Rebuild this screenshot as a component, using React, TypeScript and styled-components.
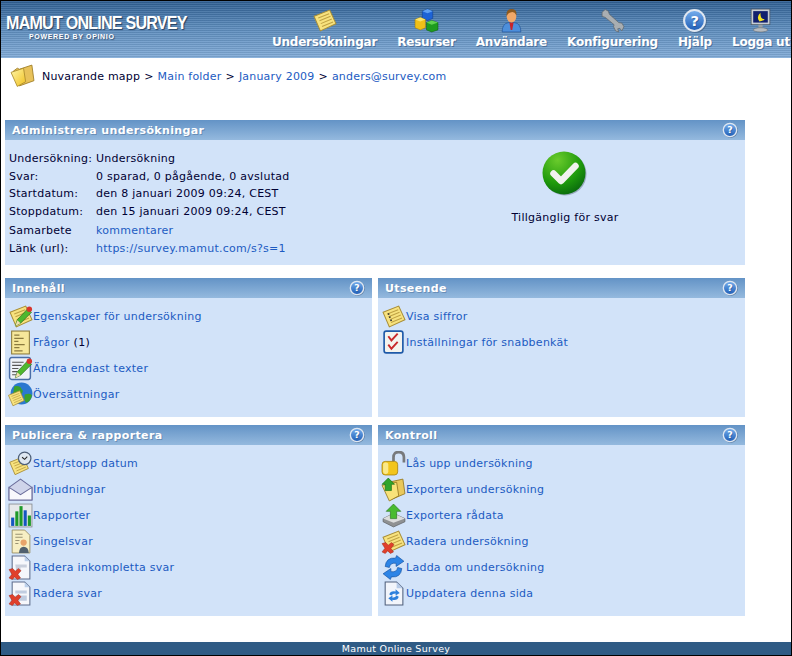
import React, { useId } from "react";
import styled, { createGlobalStyle } from "styled-components";

const Global = createGlobalStyle`
  html, body { margin: 0; padding: 0; background: #fff; }
  body { font-family: "DejaVu Sans", Verdana, sans-serif; font-size: 11px; letter-spacing: .26px; color: #000033; }
  a { color: #1c5bc2; text-decoration: none; }
`;

const Page = styled.div`
  width: 792px; height: 656px; box-sizing: border-box; overflow: hidden;
  border: 1px solid #000;
  display: flex; flex-direction: column; background: #fff;
`;
const Header = styled.header`
  height: 57px; flex: none; display: flex; justify-content: space-between; box-sizing: border-box;
  background:
    repeating-linear-gradient(to bottom, rgba(255,255,255,.09) 0 1px, rgba(0,0,0,.07) 1px 2px),
    linear-gradient(to bottom, #2f5f93 0, #5a8abb 45%, #82acd8 100%);
`;
const Logo = styled.div`
  padding: 13px 0 0 5px; color: #fff; display: flex; flex-direction: column;
`;
const LogoTitle = styled.div`
  font: bold 17.5px/18px "Liberation Sans", Arial, sans-serif; letter-spacing: -0.85px;
  transform: scaleX(.92); transform-origin: left center;
  text-shadow: 1px 1px 1px rgba(20,40,70,.75); white-space: nowrap;
`;
const LogoSub = styled.div`
  font: bold 7px/8px "Liberation Sans", Arial, sans-serif; letter-spacing: .67px; margin: 1px 0 0 23px;
  text-shadow: 1px 1px 1px rgba(20,40,70,.6); white-space: nowrap;
`;
const Nav = styled.nav`
  display: flex; gap: 20px; padding: 7px 1px 0 0;
`;
const NavItem = styled.a`
  display: flex; flex-direction: column; align-items: center; color: #fff; gap: 1px;
  font: bold 12px/16px "DejaVu Sans", Verdana, sans-serif; letter-spacing: -.2px; white-space: nowrap;
  text-shadow: 1px 1px 0 rgba(30,60,100,.45);
  svg { width: 25px; height: 25px; display: block; }
`;
const Crumbs = styled.div`
  height: 62px; flex: none; box-sizing: border-box; padding: 5px 0 0 9px;
  display: flex; align-items: flex-start; gap: 7px;
  svg { width: 25px; height: 25px; flex: none; }
`;
const CrumbText = styled.div`
  line-height: 14px; padding-top: 7px; display: flex; gap: 4px; letter-spacing: .2px; white-space: nowrap;
`;
const Content = styled.main`
  width: 740px; margin-left: 4px; flex: 1; display: flex; flex-direction: column;
`;
const Panel = styled.section`
  background: #d2e3f9; display: flex; flex-direction: column; min-width: 0;
`;
const PanelHead = styled.div`
  height: 20px; flex: none; display: flex; align-items: center; justify-content: space-between;
  padding: 0 7px 0 7px;
  background: linear-gradient(to bottom, #6393c6, #94b9de);
  color: #fff; font-weight: bold; font-size: 11px; letter-spacing: .36px; text-shadow: 1px 1px 0 rgba(30,60,100,.3);
  svg { width: 16px; height: 16px; display: block; }
`;
const AdminPanel = styled(Panel)`
  height: 145px; margin-bottom: 13px;
`;
const AdminBody = styled.div`
  display: grid; grid-template-columns: 380px 360px; flex: 1;
`;
const InfoTable = styled.div`
  padding: 10px 0 0 4px; display: grid; grid-template-columns: 87px 1fr;
  grid-template-rows: 17.5px 17.5px 17.5px 19.5px 18px 18px; line-height: 17px; align-content: start; white-space: nowrap;
`;
const Status = styled.div`
  display: flex; flex-direction: column; align-items: center; padding-top: 11px; gap: 14px; line-height: 14px;
  svg { width: 46px; height: 46px; display: block; }
`;
const Row = styled.div<{ $h: number; $mb?: number }>`
  display: grid; grid-template-columns: 367px 367px; gap: 6px;
  height: ${(p) => p.$h}px; margin-bottom: ${(p) => p.$mb ?? 0}px;
`;
const Links = styled.div`
  display: flex; flex-direction: column; padding: 5px 0 0 3px;
`;
const LinkRow = styled.a`
  display: flex; align-items: center; height: 26px; white-space: nowrap; color: #1c5bc2;
  svg { width: 25px; height: 25px; flex: none; }
`;
const Count = styled.span`
  color: #000033; margin-left: 4px;
`;
const Footer = styled.footer`
  height: 13px; flex: none; margin-top: auto; background: #2f5b85; color: #fff; text-align: center;
  font-size: 9.5px; line-height: 13px; letter-spacing: .3px;
`;

const useGid = () => useId().replace(/[^a-zA-Z0-9]/g, "");

const Note = ({ lines = true }: { lines?: boolean }) => (
  <g>
    <path d="M2 8 L17 2 L23 15 L8 22 Z" fill="#f7e27e" stroke="#a88d36" strokeWidth="1" />
    {lines && <path d="M6 9.5 L16.5 5.5 M7.2 12.2 L17.8 8 M8.4 15 L19 10.6 M9.6 17.8 L20.2 13.4" stroke="#bfa143" strokeWidth="1" />}
  </g>
);
const Pencil = () => (
  <g>
    <path d="M7 21 L9 15 L19 4.5 L22.5 8 L12 18.5 Z" fill="#4fb82e" stroke="#2b6d18" strokeWidth=".7" />
    <path d="M7 21 L9 15.5 L12 18.5 Z" fill="#f3dcb0" />
    <circle cx="20.5" cy="5" r="2.6" fill="#d8352c" />
  </g>
);
const RedX = () => (
  <path d="M1 14 L4.5 13 L7 15.5 L10 13 L12.5 15 L9.5 18.5 L12 22 L9 23.5 L6.5 21 L4 23.5 L1 22 L3.8 18.5 Z" fill="#e0402c" stroke="#a5281a" strokeWidth=".5" />
);
const Help = () => {
  const g = useGid();
  return (
    <svg viewBox="0 0 24 24">
      <defs>
        <linearGradient id={g} x1="0" y1="0" x2="0" y2="1">
          <stop offset="0" stopColor="#78b0ee" /><stop offset="1" stopColor="#1d5cb5" />
        </linearGradient>
      </defs>
      <circle cx="13" cy="13" r="10.7" fill="#33496a" opacity=".5" />
      <circle cx="12" cy="12" r="10" fill={`url(#${g})`} stroke="#dfe7f1" strokeWidth="2" />
      <text x="12" y="17" fontSize="14" fontWeight="bold" textAnchor="middle" fill="#fff" fontFamily="DejaVu Sans">?</text>
    </svg>
  );
};
const Folder = () => {
  const g = useGid();
  return (
    <svg viewBox="0 0 24 24">
      <defs>
        <linearGradient id={g} x1="0" y1="0" x2="1" y2="1">
          <stop offset="0" stopColor="#fff6a8" /><stop offset="1" stopColor="#f0c020" />
        </linearGradient>
      </defs>
      <path d="M3 8 L7 5 L9 6 L21 2 L23 17 L9 22 Z" fill="#e8c25a" stroke="#9b7a22" strokeWidth=".8" />
      <path d="M1 9 L13 5 L15 18 L7 22.5 Z" fill={`url(#${g})`} stroke="#a98a2b" strokeWidth=".8" />
    </svg>
  );
};
const IconNote = () => <svg viewBox="0 0 24 24"><Note /></svg>;
const Cubes = () => (
  <svg viewBox="0 0 24 24">
    <path d="M8 3 L13 1 L18 3 L18 10 L13 12 L8 10 Z" fill="#1d63d6" stroke="#0d3c8a" strokeWidth=".5" />
    <path d="M8 3 L13 1 L18 3 L13 5 Z" fill="#5fa0f2" />
    <path d="M1 11 L6 9 L11 11 L11 19 L6 21 L1 19 Z" fill="#f0c018" stroke="#9a7a08" strokeWidth=".5" />
    <path d="M1 11 L6 9 L11 11 L6 13 Z" fill="#fbe469" />
    <path d="M12 14 L17 12 L23 14 L23 21 L17 23 L12 21 Z" fill="#1e9c1e" stroke="#0c5a0c" strokeWidth=".5" />
    <path d="M12 14 L17 12 L23 14 L17 16 Z" fill="#5fd14f" />
  </svg>
);
const User = () => (
  <svg viewBox="0 0 24 24">
    <path d="M3 23 Q3 15 9 14 L15 14 Q21 15 21 23 Z" fill="#4d8fdb" stroke="#1f4f92" strokeWidth=".6" />
    <path d="M10 14 L14 14 L12.7 21 L11.3 21 Z" fill="#c9242a" />
    <ellipse cx="12" cy="8" rx="4.6" ry="6" fill="#f2a868" />
    <path d="M7.3 8 Q6.5 1 12 1 Q17.5 1 16.7 7 Q15 3.5 12 4 Q9 4 7.3 8 Z" fill="#8d5a20" />
  </svg>
);
const Wrench = () => (
  <svg viewBox="0 0 24 24">
    <path d="M2 4 L5 1.5 L8 3 L9 6 L18 14 L21 14.5 L23 18 L21 22 L19 19.5 L17 20 L18 23 L15 22 L13 18 L13.5 16 L5 9 L2 8 Z" fill="#a9aeb2" stroke="#5f666b" strokeWidth=".7" />
  </svg>
);
const Monitor = () => (
  <svg viewBox="0 0 24 24">
    <rect x="3" y="1" width="18" height="15" fill="#c6ccd2" stroke="#4b5560" strokeWidth=".7" />
    <rect x="5" y="3" width="14" height="11" fill="#12206e" />
    <path d="M12 4.5 Q7.5 8.5 11 13 Q15 12.5 16 10.5 Q11.5 11 12 4.5 Z" fill="#f6e21e" />
    <path d="M10 16 H14 V19 H10 Z" fill="#99a0a6" />
    <ellipse cx="12" cy="21" rx="7" ry="2" fill="#b5bbc1" stroke="#666" strokeWidth=".5" />
  </svg>
);
const Check = () => {
  const g = useGid();
  return (
    <svg viewBox="0 0 46 46">
      <defs>
        <radialGradient id={g} cx=".35" cy=".2" r=".9">
          <stop offset="0" stopColor="#6acb2c" /><stop offset=".6" stopColor="#1f9a0c" /><stop offset="1" stopColor="#05620d" />
        </radialGradient>
      </defs>
      <circle cx="23" cy="23" r="21.5" fill="#44556a" opacity=".4" />
      <circle cx="22" cy="22" r="21.5" fill={`url(#${g})`} />
      <path d="M11.5 22.5 L19 30 L33.5 15" fill="none" stroke="#f1f2ee" strokeWidth="6.5" strokeLinecap="round" strokeLinejoin="round" />
    </svg>
  );
};
const Props = () => <svg viewBox="0 0 24 24"><Note /><Pencil /></svg>;
const Questions = () => (
  <svg viewBox="0 0 24 24">
    <rect x="3.5" y="1" width="17" height="22" fill="#f6e79a" stroke="#8d7a3a" strokeWidth="1" />
    <path d="M6 5 H11 M6 8 H15 M6 11 H10 M6 14 H16 M6 17 H11 M6 20 H14" stroke="#8a7a3e" strokeWidth="1.2" />
  </svg>
);
const EditText = () => (
  <svg viewBox="0 0 24 24">
    <rect x="1.5" y="1.5" width="20" height="21" rx="2" fill="#eef2f8" stroke="#4a6ea8" strokeWidth="1.4" />
    <path d="M4 6 H15 M4 9 H13 M4 12 H10 M4 15 H9 M4 18 H9" stroke="#555" strokeWidth="1.1" />
    <Pencil />
  </svg>
);
const Globe = () => (
  <svg viewBox="0 0 24 24">
    <circle cx="13" cy="11" r="10.5" fill="#2b78d0" />
    <path d="M6 4 Q12 3 13 7 Q16 9 12 12 Q8 13 5 11 Z M16 12 Q22 10 23 13 Q21 20 17 20 Q15 16 16 12 Z" fill="#3ca12b" />
    <g transform="translate(-1 7) scale(.72)"><Note /></g>
  </svg>
);
const Digits = () => <svg viewBox="0 0 24 24"><Note /><path d="M6.5 10 l1.5 -.6 M7.7 13 l1.5 -.6 M8.9 16 l1.5 -.6" stroke="#333" strokeWidth="1.4" /></svg>;
const Quick = () => (
  <svg viewBox="0 0 24 24">
    <rect x="3" y="1" width="18" height="21" rx="2" fill="#f3f3ee" stroke="#1f5aa8" strokeWidth="1.6" />
    <path d="M7 6 L10 10 L16 3.5 M7 14 L10 18 L16 11.5" fill="none" stroke="#c8282a" strokeWidth="1.8" />
  </svg>
);
const Clock = () => (
  <svg viewBox="0 0 24 24">
    <g transform="translate(0 4) scale(.85)"><Note /></g>
    <circle cx="16" cy="7" r="6" fill="#dfe8f2" stroke="#4d5f78" strokeWidth="1.2" />
    <path d="M13.5 6 L16 8 L18.5 5.5" fill="none" stroke="#222" strokeWidth="1" />
  </svg>
);
const Mail = () => (
  <svg viewBox="0 0 24 24">
    <path d="M1 10 L12 2 L23 10 V22 H1 Z" fill="#cfd4ea" stroke="#6a6c9a" strokeWidth="1" />
    <path d="M1 10 L12 17 L23 10 L23 22 L1 22 Z" fill="#f8f8fc" stroke="#6a6c9a" strokeWidth="1" />
  </svg>
);
const Chart = () => (
  <svg viewBox="0 0 24 24">
    <rect x="1" y="1" width="22" height="22" fill="#e6e8ea" stroke="#858b90" strokeWidth=".8" />
    <rect x="3" y="14" width="3" height="8" fill="#1456c0" />
    <rect x="7" y="8" width="3" height="14" fill="#1f9a2a" />
    <rect x="11" y="3" width="3" height="19" fill="#1f9a2a" />
    <rect x="15" y="7" width="3" height="15" fill="#1456c0" />
    <rect x="19" y="12" width="3" height="10" fill="#1f9a2a" />
  </svg>
);
const Single = () => (
  <svg viewBox="0 0 24 24">
    <path d="M4 1 H16 L21 6 V23 H4 Z" fill="#f7efc4" stroke="#93875a" strokeWidth=".8" />
    <path d="M7 5 H14 M7 8 H14 M7 11 H11 M7 14 H10" stroke="#9a9272" strokeWidth="1" />
    <circle cx="15" cy="13" r="3" fill="#e7a46a" />
    <path d="M10.5 23 Q11 17 15 17 Q19.5 17 20 23 Z" fill="#50606e" />
  </svg>
);
const DelPage = ({ kind }: { kind: number }) => (
  <svg viewBox="0 0 24 24">
    <path d="M4 1 H16 L21 6 V23 H4 Z" fill="#f6f7fb" stroke="#5e6d8c" strokeWidth="1" />
    <path d="M16 1 V6 H21 Z" fill="#bcd0ea" />
    {kind === 0
      ? <path d="M7 9 H18 V12 H12 V16 H8 Z" fill="#c9cfdc" />
      : <path d="M7 9 H18 V12 H7 Z M7 14 H18 V19 H7 Z" fill="#c0cce0" />}
    <RedX />
  </svg>
);
const Lock = () => (
  <svg viewBox="0 0 24 24">
    <path d="M12 10 V6 Q12 1 17 1 Q22 1 22 6 V11" fill="none" stroke="#77797c" strokeWidth="2.6" />
    <rect x="1" y="10" width="15" height="13" rx="3" fill="#f2c51c" stroke="#a8830d" strokeWidth=".8" />
    <rect x="2" y="11" width="5" height="11" rx="2" fill="#fae98a" />
  </svg>
);
const ExportFolder = () => (
  <svg viewBox="0 0 24 24">
    <path d="M3 6 L21 2 L23 16 L9 22 Z" fill="#e9c85c" stroke="#93761e" strokeWidth=".8" />
    <path d="M1 8 L15 5 L17 18 L8 23 Z" fill="#f8e27a" stroke="#93761e" strokeWidth=".8" />
    <path d="M7 1 L13 7 H10 V13 H4 V7 H1 Z" fill="#2fa52a" stroke="#166b14" strokeWidth=".6" />
  </svg>
);
const ExportData = () => (
  <svg viewBox="0 0 24 24">
    <path d="M2 15 L12 10 L23 15 L23 18 L12 23 L2 18 Z" fill="#8f9193" stroke="#55585b" strokeWidth=".6" />
    <path d="M2 15 L12 19 L23 15 L12 10 Z" fill="#dcdddd" />
    <path d="M12 1 L19 8 H15 V15 H9 V8 H5 Z" fill="#49bb30" stroke="#257018" strokeWidth=".6" />
  </svg>
);
const DelNote = () => <svg viewBox="0 0 24 24"><Note /><RedX /></svg>;
const Reload = () => (
  <svg viewBox="0 0 24 24">
    <path d="M4 11 Q5 2 14 3 L15 0.5 L22 6 L14.5 11 L14.5 8 Q9 7 8 12 Z" fill="#2c84e6" stroke="#134e9c" strokeWidth=".6" />
    <path d="M20 13 Q19 22 10 21 L9 23.5 L2 18 L9.5 13 L9.5 16 Q15 17 16 12 Z" fill="#2c84e6" stroke="#134e9c" strokeWidth=".6" />
  </svg>
);
const RefreshPage = () => (
  <svg viewBox="0 0 24 24">
    <path d="M4 1 H15 L21 7 V23 H4 Z" fill="#f2f5fb" stroke="#50607c" strokeWidth="1" />
    <path d="M15 1 V7 H21 Z" fill="#b7cbe8" />
    <path d="M8 13 Q9 9 14 10 L14 8 L18 11.5 L14 14 L14 12 Q11 12 10 14 Z M17 15 Q16 19 11 18 L11 20 L7 16.5 L11 14 L11 16 Q14 16 15 14 Z" fill="#2c7fdc" />
  </svg>
);

const Head = ({ title }: { title: string }) => (
  <PanelHead><span>{title}</span><Help /></PanelHead>
);

const navItems: [string, React.ReactNode][] = [
  ["Undersökningar", <IconNote />], ["Resurser", <Cubes />], ["Användare", <User />],
  ["Konfigurering", <Wrench />], ["Hjälp", <Help />], ["Logga ut", <Monitor />],
];
const info: [string, string][] = [
  ["Undersökning:", "Undersökning"],
  ["Svar:", "0 sparad, 0 pågående, 0 avslutad"],
  ["Startdatum:", "den 8 januari 2009 09:24, CEST"],
  ["Stoppdatum:", "den 15 januari 2009 09:24, CEST"],
];
type L = [React.ReactNode, string, string?];
const content: L[] = [[<Props />, "Egenskaper för undersökning"], [<Questions />, "Frågor", "(1)"], [<EditText />, "Ändra endast texter"], [<Globe />, "Översättningar"]];
const look: L[] = [[<Digits />, "Visa siffror"], [<Quick />, "Inställningar för snabbenkät"]];
const publish: L[] = [[<Clock />, "Start/stopp datum"], [<Mail />, "Inbjudningar"], [<Chart />, "Rapporter"], [<Single />, "Singelsvar"], [<DelPage kind={0} />, "Radera inkompletta svar"], [<DelPage kind={1} />, "Radera svar"]];
const control: L[] = [[<Lock />, "Lås upp undersökning"], [<ExportFolder />, "Exportera undersökning"], [<ExportData />, "Exportera rådata"], [<DelNote />, "Radera undersökning"], [<Reload />, "Ladda om undersökning"], [<RefreshPage />, "Uppdatera denna sida"]];

const LinkPanel = ({ title, items }: { title: string; items: L[] }) => (
  <Panel>
    <Head title={title} />
    <Links>
      {items.map(([icon, text, count]) => (
        <LinkRow href="#" key={text}>{icon}<span>{text}</span>{count && <Count>{count}</Count>}</LinkRow>
      ))}
    </Links>
  </Panel>
);

export default function App() {
  return (
    <Page>
      <Global />
      <Header>
        <Logo>
          <LogoTitle>MAMUT ONLINE SURVEY</LogoTitle>
          <LogoSub>POWERED BY OPINIO</LogoSub>
        </Logo>
        <Nav>
          {navItems.map(([label, icon]) => (
            <NavItem href="#" key={label}>{icon}<span>{label}</span></NavItem>
          ))}
        </Nav>
      </Header>
      <Crumbs>
        <Folder />
        <CrumbText>
          <span>Nuvarande mapp</span><span>&gt;</span><a href="#">Main folder</a><span>&gt;</span>
          <a href="#">January 2009</a><span>&gt;</span><a href="#">anders@survey.com</a>
        </CrumbText>
      </Crumbs>
      <Content>
        <AdminPanel>
          <Head title="Administrera undersökningar" />
          <AdminBody>
            <InfoTable>
              {info.map(([k, v]) => (
                <React.Fragment key={k}><span>{k}</span><span>{v}</span></React.Fragment>
              ))}
              <span>Samarbete</span><a href="#">kommentarer</a>
              <span>Länk (url):</span><a href="#">https://survey.mamut.com/s?s=1</a>
            </InfoTable>
            <Status>
              <Check />
              <span>Tillgänglig för svar</span>
            </Status>
          </AdminBody>
        </AdminPanel>
        <Row $h={139} $mb={8}>
          <LinkPanel title="Innehåll" items={content} />
          <LinkPanel title="Utseende" items={look} />
        </Row>
        <Row $h={191}>
          <LinkPanel title="Publicera & rapportera" items={publish} />
          <LinkPanel title="Kontroll" items={control} />
        </Row>
      </Content>
      <Footer>Mamut Online Survey</Footer>
    </Page>
  );
}
